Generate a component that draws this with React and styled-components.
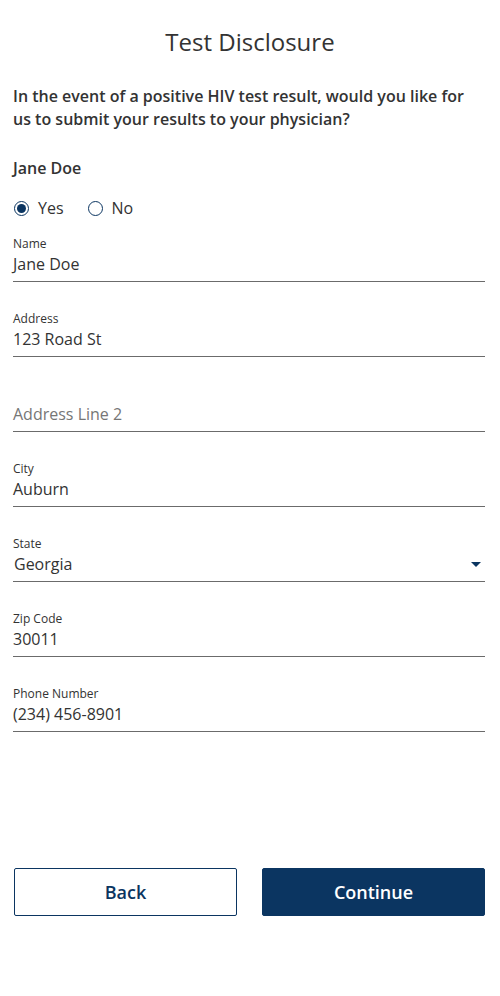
import React from "react";
import styled, { createGlobalStyle } from "styled-components";

const Global = createGlobalStyle`
  html, body { margin: 0; padding: 0; background: #fff; }
  body { font-family: "Open Sans", "Noto Sans", sans-serif; color: #333; }
  * { box-sizing: border-box; }
`;

const Page = styled.div`
  width: 500px;
  min-height: 996px;
  padding: 26px 15px 0 13px;
  display: flex;
  flex-direction: column;
`;

const Title = styled.h1`
  margin: 0;
  font-size: 24px;
  line-height: 32px;
  font-weight: 400;
  text-align: center;
  color: #333;
  padding-left: 2px;
`;

const Question = styled.p`
  margin: 27px 0 0;
  font-size: 16px;
  line-height: 23px;
  font-weight: 600;
  color: #333;
`;

const PersonName = styled.div`
  margin-top: 25px;
  font-size: 16px;
  line-height: 24px;
  font-weight: 600;
`;

const RadioRow = styled.div`
  display: flex;
  align-items: center;
  gap: 24px;
  margin-top: 16px;
  height: 24px;
  padding-left: 1px;
`;

const RadioLabel = styled.label`
  display: flex;
  align-items: center;
  gap: 9px;
  font-size: 16px;
  line-height: 24px;
  color: #333;
`;

const RadioCircle = styled.span`
  width: 15px;
  height: 15px;
  border-radius: 50%;
  border: 1.5px solid #0b3561;
  display: flex;
  align-items: center;
  justify-content: center;
  &::after {
    content: "";
    width: 9px;
    height: 9px;
    border-radius: 50%;
    background: ${(p) => (p.$checked ? "#0b3561" : "transparent")};
  }
`;

const Fields = styled.div`
  display: flex;
  flex-direction: column;
  gap: 29px;
  margin-top: 16px;
`;

const Field = styled.div`
  display: flex;
  flex-direction: column;
  border-bottom: 1px solid #6b6b6b;
  padding-bottom: 5px;
`;

const Label = styled.div`
  font-size: 12px;
  line-height: 16px;
  height: 16px;
  font-weight: 500;
  color: #333;
`;

const ValueRow = styled.div`
  display: flex;
  align-items: center;
  justify-content: space-between;
  height: 24px;
`;

const Value = styled.span`
  font-size: 16px;
  line-height: 24px;
  color: ${(p) => (p.$placeholder ? "#767676" : "#333")};
  padding-left: ${(p) => (p.$inset ? "1px" : "0")};
`;

const Caret = styled.span`
  width: 0;
  height: 0;
  border-left: 5px solid transparent;
  border-right: 5px solid transparent;
  border-top: 5px solid #0b3561;
  margin-right: 4px;
`;

const Actions = styled.div`
  display: grid;
  grid-template-columns: 1fr 1fr;
  gap: 25px;
  margin-top: 136px;
  padding-left: 1px;
`;

const Button = styled.button`
  height: 48px;
  border-radius: 2px;
  border: 1.5px solid #0b3561;
  background: ${(p) => (p.$primary ? "#0b3561" : "#fff")};
  color: ${(p) => (p.$primary ? "#fff" : "#0b3561")};
  font-family: "Open Sans", "Noto Sans", sans-serif;
  font-size: 18px;
  font-weight: 600;
  cursor: pointer;
`;

const fields = [
  { label: "Name", value: "Jane Doe" },
  { label: "Address", value: "123 Road St" },
  { label: "", value: "Address Line 2", placeholder: true },
  { label: "City", value: "Auburn" },
  { label: "State", value: "Georgia", select: true },
  { label: "Zip Code", value: "30011" },
  { label: "Phone Number", value: "(234) 456-8901" },
];

export default function App() {
  return (
    <>
      <Global />
      <Page>
        <Title>Test Disclosure</Title>
        <Question>
          In the event of a positive HIV test result, would you like for us to
          submit your results to your physician?
        </Question>
        <PersonName>Jane Doe</PersonName>
        <RadioRow>
          <RadioLabel>
            <RadioCircle $checked />
            Yes
          </RadioLabel>
          <RadioLabel>
            <RadioCircle />
            No
          </RadioLabel>
        </RadioRow>
        <Fields>
          {fields.map((f) => (
            <Field key={f.value}>
              <Label>{f.label}</Label>
              <ValueRow>
                <Value $placeholder={f.placeholder} $inset={f.select}>
                  {f.value}
                </Value>
                {f.select && <Caret />}
              </ValueRow>
            </Field>
          ))}
        </Fields>
        <Actions>
          <Button>Back</Button>
          <Button $primary>Continue</Button>
        </Actions>
      </Page>
    </>
  );
}
